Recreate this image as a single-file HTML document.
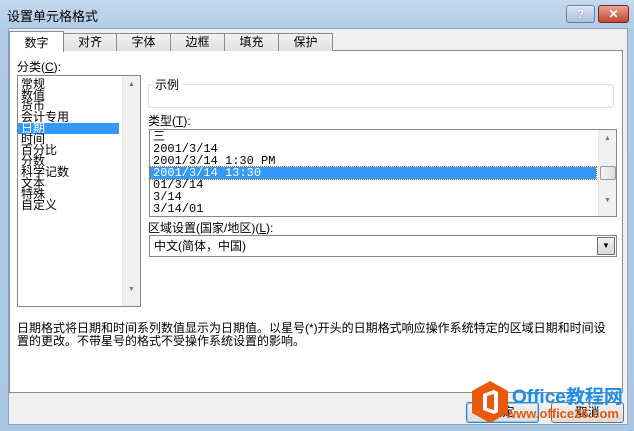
<html><head><style>
body{margin:0;width:634px;height:431px;overflow:hidden;background:#a9c6e3;font:12px "Liberation Sans","Noto Sans CJK SC","WenQuanYi Zen Hei",sans-serif;position:relative}
.a{position:absolute}
.win{left:0;top:0;width:634px;height:431px;background:linear-gradient(#c4d8ee,#b0cbe6 30px,#a9c6e3)}
.client{left:8px;top:28px;width:618px;height:395px;background:#f0f0f0;border:1px solid #8ea5c0}
.tab{top:33px;height:17px;border:1px solid #898c95;border-bottom:none;background:linear-gradient(#f2f2f2,#e1e1e1);text-align:center;line-height:17px;font-size:12px}
.panel{left:9px;top:50px;width:612px;height:341px;border:1px solid #898c95;background:#fff}
.box{border:1px solid #828790;background:#fff}
.li{line-height:11px;font-size:12px;padding-left:3px}
.mono{font-family:"Liberation Mono","Noto Sans CJK SC",monospace;font-size:12px}
.sb{background:#f0f0f0;border-left:1px solid #e6e6e6}
.btn{height:19px;border:1px solid #707070;border-radius:3px;background:linear-gradient(#f2f2f2,#dcdcdc);text-align:center;line-height:19px}
</style></head><body>
<div class="a win"></div>
<div class="a" style="left:7px;top:6px;font-size:13px;color:#000">设置单元格格式</div>
<div class="a" style="left:566px;top:5px;width:27px;height:16px;border:1px solid #6d7f96;border-radius:3px;background:linear-gradient(#dbe7f4,#a9c0dc);color:#fff;text-align:center;font-weight:bold;line-height:16px;text-shadow:0 0 1px #234">?</div>
<div class="a" style="left:598px;top:5px;width:29px;height:16px;border:1px solid #6a2a20;border-radius:3px;background:linear-gradient(#e9a393,#c5452f);color:#fff;text-align:center;font-weight:bold;line-height:16px">✕</div>
<div class="a client"></div>
<div class="a panel"></div>
<div class="a tab" style="left:63px;width:52px">对齐</div>
<div class="a tab" style="left:116px;width:53px">字体</div>
<div class="a tab" style="left:170px;width:53px">边框</div>
<div class="a tab" style="left:224px;width:53px">填充</div>
<div class="a tab" style="left:278px;width:53px">保护</div>
<div class="a tab" style="left:9px;top:31px;height:20px;width:53px;background:#fff;line-height:22px">数字</div>
<div class="a" style="left:17px;top:58px">分类(<u>C</u>):</div>
<div class="a box" style="left:17px;top:75px;width:122px;height:230px">
<div class="li" style="margin-top:3px">常规</div><div class="li">数值</div><div class="li">货币</div><div class="li">会计专用</div>
<div class="li" style="background:#3399ff;color:#fff;width:98px">日期</div><div class="li">时间</div><div class="li">百分比</div><div class="li">分数</div><div class="li">科学记数</div><div class="li">文本</div><div class="li">特殊</div><div class="li">自定义</div>
<div class="a sb" style="left:104px;top:0;width:17px;height:230px"><div style="font-size:7px;color:#777;text-align:center;margin-top:5px">▲</div><div style="font-size:7px;color:#777;text-align:center;margin-top:198px">▼</div></div>
</div>
<div class="a" style="left:148px;top:84px;width:464px;height:22px;border:1px solid #d5dfe5;border-radius:3px"></div>
<div class="a" style="left:152px;top:76px;background:#fff;padding:0 3px">示例</div>
<div class="a" style="left:148px;top:112px">类型(<u>T</u>):</div>
<div class="a box" style="left:149px;top:129px;width:466px;height:86px">
<div class="li mono" style="margin-top:2px">三</div>
<div class="li mono" style="line-height:12px">2001/3/14</div>
<div class="li mono" style="line-height:12px">2001/3/14 1:30 PM</div>
<div class="li mono" style="line-height:12px;background:#3399ff;color:#fff;width:443px;outline:1px dotted #c60">2001/3/14 13:30</div>
<div class="li mono" style="line-height:12px">01/3/14</div>
<div class="li mono" style="line-height:12px">3/14</div>
<div class="li mono" style="line-height:12px">3/14/01</div>
<div class="a sb" style="left:448px;top:0;width:17px;height:86px"><div style="font-size:7px;color:#777;text-align:center;margin-top:5px">▲</div><div style="position:absolute;left:1px;top:36px;width:14px;height:12px;border:1px solid #999;border-radius:2px;background:linear-gradient(90deg,#f4f4f4,#dcdcdc)"></div><div style="font-size:7px;color:#777;text-align:center;margin-top:55px">▼</div></div>
</div>
<div class="a" style="left:148px;top:219px">区域设置(国家/地区)(<u>L</u>):</div>
<div class="a box" style="left:149px;top:235px;width:466px;height:20px;line-height:20px"><span style="padding-left:4px">中文(简体，中国)</span>
<div class="a" style="right:1px;top:1px;width:16px;height:16px;border:1px solid #707070;background:linear-gradient(#f2f2f2,#d8d8d8);font-size:8px;text-align:center;line-height:16px">▼</div></div>
<div class="a" style="left:17px;top:322px;width:600px;line-height:13px">日期格式将日期和时间系列数值显示为日期值。以星号(*)开头的日期格式响应操作系统特定的区域日期和时间设置的更改。不带星号的格式不受操作系统设置的影响。</div>
<div class="a btn" style="left:466px;top:402px;width:71px;border-color:#3c7fb1;box-shadow:0 0 0 1px #8fd0f6 inset">确定</div>
<div class="a btn" style="left:551px;top:402px;width:71px">取消</div>
<svg class="a" style="left:470px;top:380px" width="40" height="44" viewBox="0 0 40 44"><polygon points="20,1 38,11 38,33 20,43 2,33 2,11" fill="#e8590c"/><path d="M13,14 L24,10 L28,12 L28,32 L24,34 L13,30 Z M17,16 V28 L24,30 V14 Z" fill="#fff"/></svg>
<div class="a" style="left:512px;top:382px;color:#1e8ee8;font-weight:bold;font-size:19px">Office教程网</div>
<div class="a" style="left:506px;top:406px;color:#e8590c;font-weight:bold;font-size:13px">www.office26.com</div>
</body></html>
